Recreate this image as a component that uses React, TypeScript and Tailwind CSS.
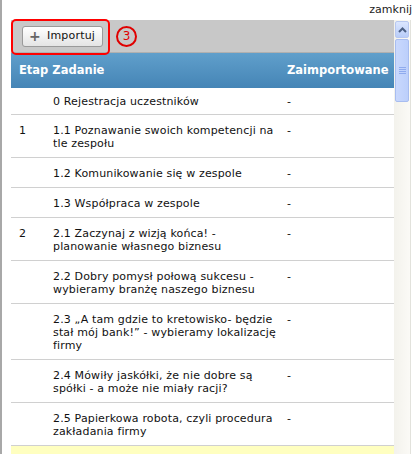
import React from 'react'

const rows: { etap: string; lines: string[]; first?: boolean }[] = [
    { etap: '', lines: ['0 Rejestracja uczestników'], first: true },
    { etap: '1', lines: ['1.1 Poznawanie swoich kompetencji na', 'tle zespołu'] },
    { etap: '', lines: ['1.2 Komunikowanie się w zespole'] },
    { etap: '', lines: ['1.3 Współpraca w zespole'] },
    { etap: '2', lines: ['2.1 Zaczynaj z wizją końca! -', 'planowanie własnego biznesu'] },
    { etap: '', lines: ['2.2 Dobry pomysł połową sukcesu -', 'wybieramy branżę naszego biznesu'] },
    { etap: '', lines: ['2.3 „A tam gdzie to kretowisko- będzie', 'stał mój bank!” - wybieramy lokalizację', 'firmy'] },
    { etap: '', lines: ['2.4 Mówiły jaskółki, że nie dobre są', 'spółki - a może nie miały racji?'] },
    { etap: '', lines: ['2.5 Papierkowa robota, czyli procedura', 'zakładania firmy'] },
]

const App = () => {
    return (
        <div className="w-[416px] h-[454px] overflow-hidden bg-white border-l-2 border-[#a8a8a8] text-[11px] text-[#111] font-['DejaVu_Sans',sans-serif]">
            <div className="h-[20px] flex justify-end items-start pt-[2px] pr-[4px] text-[#222]">zamknij</div>

            <div className="flex pl-[9px] h-[434px]">
                {/* content */}
                <div className="relative w-[383px] flex flex-col">
                    <div className="h-[33px] bg-[#c8c8c8] border-b border-[#b0b0b0] flex items-center pl-[11px] gap-[13px]">
                        <button type="button" className="h-[21px] w-[81px] flex items-center gap-[6px] px-[6px] rounded-[3px] border border-[#9a9a9a] bg-gradient-to-b from-white to-[#e4e4e4] text-[11px] tracking-[0.2px] text-[#111]">
                            <span className="text-[#666] font-bold text-[14px] leading-none">+</span>
                            <span>Importuj</span>
                        </button>
                        <span className="w-[21px] h-[21px] rounded-full border-2 border-[#e00000] text-[#e00000] text-[12px] flex items-center justify-center leading-none">3</span>
                    </div>
                    <div className="absolute left-0 top-[-1px] w-[99px] h-[36px] rounded-[5px] border-2 border-[#ff0000]"></div>

                    <div className="h-[35px] bg-gradient-to-b from-[#609fcb] to-[#4585b6] flex items-center text-white font-bold text-[11.5px]">
                        <div className="w-[276px] pl-[8px]">Etap Zadanie</div>
                        <div className="pl-0">Zaimportowane</div>
                    </div>

                    {rows.map((r, i) => (
                        <div key={i} className={`flex border-b border-[#d0d0d0] leading-[13px] tracking-[0.15px] ${r.first ? 'pt-[7px] pb-[6px]' : 'pt-[9px] pb-[7px]'}`}>
                            <div className="w-[34px] pl-[8px]">{r.etap}</div>
                            <div className="w-[242px] pl-[8px]">
                                {r.lines.map((l, j) => (
                                    <div key={j} className="whitespace-nowrap">{l}</div>
                                ))}
                            </div>
                            <div className="pl-0">-</div>
                        </div>
                    ))}
                    <div className="flex-1 bg-[#ffffc0]"></div>
                </div>

                {/* scrollbar */}
                <div className="w-[17px] flex flex-col bg-gradient-to-r from-[#f3f2ec] to-[#fbfaf6] border-r border-[#e2e2dc]">
                    <div className="h-[17px] mt-[1px] mx-[1px] rounded-[2px] border border-[#b8c8f0] bg-gradient-to-b from-[#dbe6fe] to-[#b9cdf9] flex items-center justify-center">
                        <svg width="9" height="6" viewBox="0 0 9 6">
                            <path d="M1 5 L4.5 1.5 L8 5" fill="none" stroke="#4d6185" strokeWidth="2" />
                        </svg>
                    </div>
                    <div className="h-[63px] mx-[1px] mt-[1px] rounded-[2px] border border-[#a8bdf0] bg-gradient-to-r from-[#c9d8fd] to-[#bccffb] flex flex-col items-center justify-center gap-[1px]">
                        <div className="w-[7px] h-[1px] bg-[#8faaee]"></div>
                        <div className="w-[7px] h-[1px] bg-[#8faaee]"></div>
                        <div className="w-[7px] h-[1px] bg-[#8faaee]"></div>
                        <div className="w-[7px] h-[1px] bg-[#8faaee]"></div>
                    </div>
                </div>
            </div>
        </div>
    )
}

export default App
